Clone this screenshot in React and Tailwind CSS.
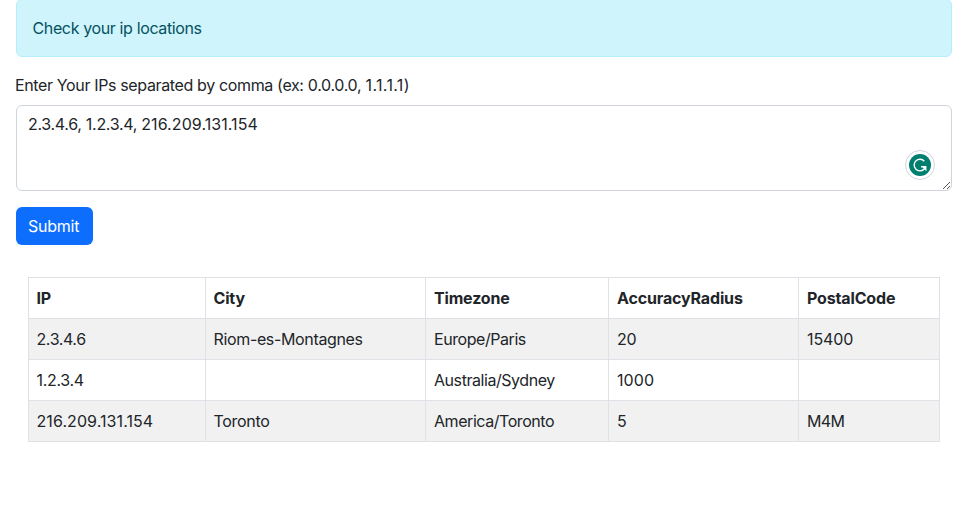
const columns = [
  { label: "IP", style: "w-[177px] px-[7.5px] tracking-[-0.2px]" },
  { label: "City", style: "w-[220px] px-[7.5px] tracking-[-0.15px]" },
  { label: "Timezone", style: "w-[183px] px-2 tracking-[-0.17px]" },
  { label: "AccuracyRadius", style: "w-[190px] px-2 tracking-[-0.15px]" },
  { label: "PostalCode", style: "w-[141px] px-2 tracking-[-0.15px]" },
];

const cellPadding = ["px-[7.5px]", "px-[7.5px]", "px-2", "px-2", "px-2"];

const tight = "tracking-[-0.44px]";
const snug = "tracking-[-0.32px]";
const loose = "tracking-[0.08px]";

const rows = [
  [["2.3.4.6", "tracking-[-0.4px]"], ["Riom-es-Montagnes", "tracking-[-0.35px]"], ["Europe/Paris", tight], ["20", snug], ["15400", "tracking-[-0.1px]"]],
  [["1.2.3.4", snug], ["", snug], ["Australia/Sydney", tight], ["1000", loose], ["", snug]],
  [["216.209.131.154", loose], ["Toronto", snug], ["America/Toronto", tight], ["5", snug], ["M4M", "tracking-[-0.7px]"]],
];

function AssistantBadge() {
  return (
    <svg className="absolute top-[43px] right-[15px] h-8 w-8" viewBox="0 0 32 32" fill="none">
      <circle cx="16" cy="16" r="14.5" fill="#fff" stroke="#d2d4e0" />
      <circle cx="16" cy="16" r="11" fill="#027e6f" />
      <path d="M20.3 12.2A5.8 5.8 0 1 0 20 20.2L21 18.2" stroke="#fff" strokeWidth="1.4" />
      <path d="M17 17H22.4V22.3L20.3 20.2L18.9 18.4H17Z" fill="#fff" />
    </svg>
  );
}

function ResizeGrip() {
  return (
    <svg className="absolute right-0 bottom-0 h-[9px] w-[9px]" viewBox="0 0 9 9" stroke="#444" strokeWidth="0.9">
      <path d="M1 8L8 1M5 8L8 5" />
    </svg>
  );
}

export default function App() {
  return (
    <div className="h-[529px] overflow-hidden bg-white pr-[10px] pl-4 font-['Inter',sans-serif] text-base text-[#212529]">
      <div className="-mt-[1px] h-[58px] rounded-md border border-[#b6effb] bg-[#cff4fc] px-[15.5px] pt-4 tracking-[-0.37px] text-[#055160]">
        Check your ip locations
      </div>
      <form className="mt-4">
        <label className="-ml-[1px] block h-8 tracking-[-0.36px]">
          Enter Your IPs separated by comma (ex: <span className="tracking-[-0.3px]">0.0.0.0, </span>
          <span className="tracking-[0.35px]">1.1.1.1)</span>
        </label>
        <div className="relative h-[86px] rounded-md border border-[#ced4da] px-[11px] py-[6px] tracking-[-0.3px]">
          2.3.4.6, 1.2.3.4, <span className="tracking-[0.07px]">216.209.131.154</span>
          <AssistantBadge />
          <ResizeGrip />
        </div>
        <button type="button" className="mt-4 block h-[38px] w-[77px] rounded-md bg-[#0d6efd] pl-3 text-left tracking-[-0.25px] text-white">
          Submit
        </button>
      </form>
      <table className="mt-8 ml-3 w-[912px] table-fixed border-collapse text-left">
        <thead>
          <tr className="h-[41px]">
            {columns.map((column) => (
              <th key={column.label} className={`border border-[#dee2e6] font-bold ${column.style}`}>
                {column.label}
              </th>
            ))}
          </tr>
        </thead>
        <tbody>
          {rows.map((row, r) => (
            <tr key={r} className="h-[41px] odd:bg-[#f1f1f1]">
              {row.map(([text, tracking], i) => (
                <td key={i} className={`border border-[#dee2e6] ${cellPadding[i]} ${tracking}`}>{text}</td>
              ))}
            </tr>
          ))}
        </tbody>
      </table>
    </div>
  );
}
